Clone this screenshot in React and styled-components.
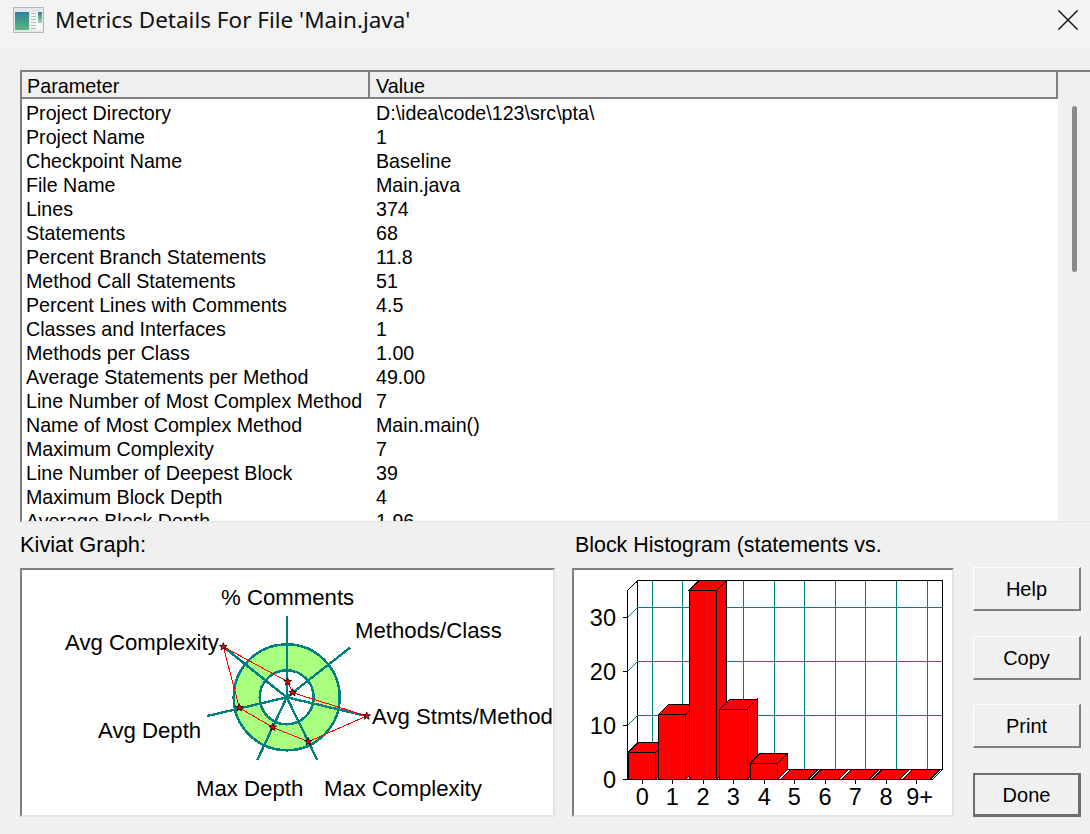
import React from 'react'
import styled, { createGlobalStyle } from 'styled-components'

const TEAL = '#008080'

const rows = [
  ['Project Directory', 'D:\\idea\\code\\123\\src\\pta\\'],
  ['Project Name', '1'],
  ['Checkpoint Name', 'Baseline'],
  ['File Name', 'Main.java'],
  ['Lines', '374'],
  ['Statements', '68'],
  ['Percent Branch Statements', '11.8'],
  ['Method Call Statements', '51'],
  ['Percent Lines with Comments', '4.5'],
  ['Classes and Interfaces', '1'],
  ['Methods per Class', '1.00'],
  ['Average Statements per Method', '49.00'],
  ['Line Number of Most Complex Method', '7'],
  ['Name of Most Complex Method', 'Main.main()'],
  ['Maximum Complexity', '7'],
  ['Line Number of Deepest Block', '39'],
  ['Maximum Block Depth', '4'],
  ['Average Block Depth', '1.96'],
]

const GlobalStyle = createGlobalStyle`
  html, body {
    margin: 0;
    padding: 0;
    background: #f0f0f0;
  }
  body {
    font-family: "Liberation Sans", Arial, sans-serif;
    color: #000;
  }
`

const Window = styled.div`
  width: 1090px;
  height: 834px;
  overflow: hidden;
  display: flex;
  flex-direction: column;
  background: #f0f0f0;
`

const TitleBar = styled.div`
  height: 48px;
  flex: none;
  display: flex;
  align-items: center;
  padding: 0 11px 8px 13px;
  box-sizing: border-box;
  background: #f3f3f3;
`

const Title = styled.div`
  flex: 1;
  margin: 0 0 2px 10px;
  font-family: "Noto Sans", sans-serif;
  font-size: 22.5px;
  color: #111;
`

const Grid = styled.div`
  margin: 22px 0 0 20px;
  height: 452px;
  flex: none;
  display: flex;
  border-top: 2px solid #808080;
  border-left: 2px solid #808080;
  border-bottom: 1px solid #e3e3e3;
  box-sizing: border-box;
`

const GridBody = styled.div`
  width: 1036px;
  flex: none;
  display: flex;
  flex-direction: column;
  background: #fff;
  overflow: hidden;
`

const HeaderRow = styled.div`
  height: 27px;
  flex: none;
  display: flex;
  background: #f0f0f0;
  border-bottom: 2px solid #808080;
  border-right: 2px solid #808080;
  box-sizing: border-box;
`

const HeaderCell = styled.div`
  width: ${p => p.$width}px;
  padding-left: ${p => p.$pad}px;
  font-size: 19.8px;
  line-height: 28px;
  box-sizing: border-box;
  border-right: ${p => (p.$divider ? '2px solid #808080' : 'none')};
`

const Rows = styled.div`
  padding-top: 2px;
`

const Row = styled.div`
  display: flex;
  height: 24px;
  font-size: 19.65px;
  line-height: 24px;
  white-space: nowrap;
`

const ParamCell = styled.div`
  width: 354px;
  padding-left: 4px;
  box-sizing: border-box;
  flex: none;
`

const ValueCell = styled.div`
  flex: 1;
`

const ScrollTrack = styled.div`
  flex: 1;
  padding: 34px 0 0 14px;
`

const ScrollThumb = styled.div`
  width: 5px;
  height: 166px;
  border-radius: 3px;
  background: #8a8a8a;
`

const Bottom = styled.div`
  flex: 1;
  display: flex;
  padding: 11px 9px 0 20px;
  min-height: 0;
`

const Section = styled.div`
  width: ${p => p.$width}px;
  margin-right: ${p => p.$gap}px;
  flex: none;
`

const SectionLabel = styled.div`
  height: 35px;
  font-size: ${p => p.$size}px;
  line-height: 24px;
  white-space: nowrap;
  margin-left: ${p => p.$indent || 0}px;
`

const ChartFrame = styled.div`
  height: 249px;
  box-sizing: border-box;
  background: #fff;
  border-top: 2px solid #808080;
  border-left: 2px solid #808080;
  border-right: 2px solid #e3e3e3;
  border-bottom: 2px solid #e3e3e3;
  overflow: hidden;

  svg {
    display: block;
  }
  text {
    font-family: "Liberation Sans", Arial, sans-serif;
    font-size: ${p => p.$fontSize}px;
    fill: #000;
  }
`

const Buttons = styled.div`
  width: 108px;
  flex: none;
  margin-top: 34px;
  display: flex;
  flex-direction: column;
  gap: 24.5px;
`

const Button = styled.button`
  height: 44px;
  padding: 2px 0 0;
  font-family: inherit;
  font-size: 20px;
  color: #000;
  background: #f0f0f0;
  box-sizing: border-box;
  border-style: solid;
  border-width: ${p => (p.$primary ? '2px 3px 3px 2px' : '1px 2px 2px 1px')};
  border-color: ${p => (p.$primary ? '#6e6e6e' : '#fff #808080 #808080 #fff')};
`

const AppIcon = () => (
  <svg width="32" height="26" viewBox="0 0 32 26">
    <defs>
      <linearGradient id="iconFill" x1="0" y1="0" x2="0" y2="1">
        <stop offset="0" stopColor="#2f7fa0" />
        <stop offset="1" stopColor="#5cb87a" />
      </linearGradient>
      <linearGradient id="iconStrip" x1="0" y1="0" x2="0" y2="1">
        <stop offset="0" stopColor="#2f7f90" />
        <stop offset="1" stopColor="#a5d8b8" />
      </linearGradient>
    </defs>
    <rect x="0.5" y="0.5" width="30" height="25" fill="#e4e7e9" stroke="#b4babe" />
    <rect x="2" y="5" width="14" height="18" fill="url(#iconFill)" />
    <rect x="17" y="5" width="12" height="18" fill="#f7f7f7" />
    <path d="M18 6.5h5M18 9.5h5M18 12.5h5M18 15.5h5M18 18.5h5M18 21.5h5" stroke="#b0b8bb" strokeWidth="1" />
    <rect x="25" y="5" width="4" height="11" fill="url(#iconStrip)" />
  </svg>
)

const CloseIcon = () => (
  <svg width="22" height="22" viewBox="0 0 22 22">
    <path d="M1.5 1.5l19 19M20.5 1.5l-19 19" stroke="#1a1a1a" strokeWidth="1.5" fill="none" />
  </svg>
)

// kiviat coordinates are local to the white frame (frame inner origin is 22,570 on the page)
const ox = 22
const oy = 570
const center = [286.7 - ox, 697.3 - oy]
const spokes = [
  [286.7, 616], [350, 647.7], [366.7, 716], [317.3, 760], [257.3, 760], [207.3, 716], [223.3, 646.7],
].map(([x, y]) => [x - ox, y - oy])
const trace = [
  [287.7, 681.7], [292.7, 692.7], [366.7, 716], [308.3, 741.7], [272.7, 727.3], [239.3, 707.7], [223.3, 646.7],
].map(([x, y]) => [x - ox, y - oy])
const kiviatLabels = [
  ['% Comments', 221, 605],
  ['Methods/Class', 355, 638],
  ['Avg Complexity', 65, 650],
  ['Avg Stmts/Method', 372, 724],
  ['Avg Depth', 98, 738],
  ['Max Depth', 196, 796],
  ['Max Complexity', 324, 796],
]

const starPoints = (x, y) => {
  const pts = []
  for (let i = 0; i < 10; i++) {
    const r = i % 2 ? 1.6 : 4
    const a = (Math.PI / 5) * i - Math.PI / 2
    pts.push(`${x + r * Math.cos(a)},${y + r * Math.sin(a)}`)
  }
  return pts.join(' ')
}

const KiviatGraph = () => (
  <svg width="533" height="245" viewBox="0 0 533 245">
    <g shapeRendering="crispEdges">
      <circle cx={center[0]} cy={center[1]} r="40" fill="none" stroke="#a8ff80" strokeWidth="26" />
      <circle cx={center[0]} cy={center[1]} r="53" fill="none" stroke={TEAL} strokeWidth="2.5" />
      <circle cx={center[0]} cy={center[1]} r="27" fill="none" stroke={TEAL} strokeWidth="2.5" />
      {spokes.map(([x, y], i) => (
        <line key={i} x1={center[0]} y1={center[1]} x2={x} y2={y} stroke={TEAL} strokeWidth="2.4" />
      ))}
      <polygon points={trace.map(p => p.join(',')).join(' ')} fill="none" stroke="#ff0000" strokeWidth="1" />
    </g>
    {trace.map(([x, y], i) => (
      <polygon key={i} points={starPoints(x, y)} fill="#ff0000" stroke="#000" strokeWidth="0.8" />
    ))}
    {kiviatLabels.map(([label, x, y]) => (
      <text key={label} x={x - ox} y={y - oy}>{label}</text>
    ))}
  </svg>
)

// histogram, page coordinates shifted into the frame (inner origin 574,570)
const hx = 574
const hy = 570
const DEPTH = 10
const BASE = 779.3
const TOP = 580.7
const PER_UNIT = 5.4
const bars = [
  [628.3, 5], [658.3, 12], [689.3, 35], [719.7, 13], [750.3, 3],
  [780.6, 0], [811.3, 0], [841.6, 0], [872.3, 0], [903, 0],
]
const BAR_W = 27.4
const vLines = [652.3, 682.3, 713, 743.3, 774.3, 804.3, 835.3, 865.7, 896.3, 927.3]
const ticks = [642.3, 672.3, 703, 733.3, 764.3, 794.3, 825, 855.3, 886, 916.7]
const xLabels = ['0', '1', '2', '3', '4', '5', '6', '7', '8', '9+']
const yLines = [[30, 607.3], [20, 661.3], [10, 715.3]]

const Bar = ({ x, value }) => {
  const l = x - hx
  const r = l + BAR_W
  const b = BASE - hy
  const t = b - value * PER_UNIT
  const topY = Math.max(t - DEPTH, TOP - hy)
  const shift = t - topY
  const props = { fill: '#ff0000', stroke: '#000', strokeWidth: 1 }
  return (
    <g>
      {value > 0 && <polygon {...props} points={`${r},${t} ${r + shift},${topY} ${r + shift},${b - DEPTH} ${r},${b}`} />}
      <polygon {...props} points={`${l},${t} ${l + shift},${topY} ${r + shift},${topY} ${r},${t}`} />
      {value > 0 && <rect {...props} x={l} y={t} width={BAR_W} height={b - t} />}
    </g>
  )
}

const Histogram = () => (
  <svg width="378" height="245" viewBox="0 0 378 245">
    <g shapeRendering="crispEdges">
      <rect x={637.7 - hx} y={TOP - hy} width={305} height={BASE - DEPTH - TOP} fill="#fff" stroke="#000" />
      {vLines.map(x => (
        <line key={x} x1={x - hx} y1={TOP - hy + 0.5} x2={x - hx} y2={BASE - DEPTH - hy} stroke={TEAL} />
      ))}
      {yLines.map(([v, y]) => (
        <g key={v}>
          <line x1={637.7 - hx} y1={y - hy} x2={942.7 - hx} y2={y - hy} stroke={TEAL} />
          <line x1={637.7 - hx} y1={y - hy} x2={627.7 - hx} y2={y + DEPTH - hy} stroke={TEAL} />
          <line x1={623.3 - hx} y1={y + DEPTH - hy} x2={627.7 - hx} y2={y + DEPTH - hy} stroke="#000" />
        </g>
      ))}
      <path
        d={`M${627.7 - hx} ${BASE - hy}V${590.3 - hy}L${637.7 - hx} ${TOP - hy}M${627.7 - hx} ${BASE - hy}L${637.7 - hx} ${BASE - DEPTH - hy}M${942.7 - hx} ${BASE - DEPTH - hy}L${932.7 - hx} ${BASE - hy}H${623.3 - hx}`}
        fill="none"
        stroke="#000"
      />
      {bars.map(([x, value]) => <Bar key={x} x={x} value={value} />)}
      {ticks.map(x => (
        <line key={x} x1={x - hx} y1={BASE - hy} x2={x - hx} y2={BASE + 5 - hy} stroke="#000" />
      ))}
    </g>
    {yLines.map(([v, y]) => (
      <text key={v} x={616 - hx} y={y + 18.5 - hy} textAnchor="end">{v}</text>
    ))}
    <text x={616 - hx} y={788 - hy} textAnchor="end">0</text>
    {ticks.map((x, i) => (
      <text key={x} x={x - hx + (i === 9 ? 3 : 0)} y={805 - hy} textAnchor="middle">{xLabels[i]}</text>
    ))}
  </svg>
)

const App = () => (
  <Window>
    <GlobalStyle />
    <TitleBar>
      <AppIcon />
      <Title>Metrics Details For File 'Main.java'</Title>
      <CloseIcon />
    </TitleBar>
    <Grid>
      <GridBody>
        <HeaderRow>
          <HeaderCell $width={348} $pad={5} $divider>Parameter</HeaderCell>
          <HeaderCell $width={600} $pad={6}>Value</HeaderCell>
        </HeaderRow>
        <Rows>
          {rows.map(([name, value]) => (
            <Row key={name}>
              <ParamCell>{name}</ParamCell>
              <ValueCell>{value}</ValueCell>
            </Row>
          ))}
        </Rows>
      </GridBody>
      <ScrollTrack>
        <ScrollThumb />
      </ScrollTrack>
    </Grid>
    <Bottom>
      <Section $width={535} $gap={17}>
        <SectionLabel $size={21.8}>Kiviat Graph:</SectionLabel>
        <ChartFrame $fontSize={22.2}><KiviatGraph /></ChartFrame>
      </Section>
      <Section $width={382} $gap={19}>
        <SectionLabel $size={21.4} $indent={3}>Block Histogram (statements vs.</SectionLabel>
        <ChartFrame $fontSize={23.5}><Histogram /></ChartFrame>
      </Section>
      <Buttons>
        <Button>Help</Button>
        <Button>Copy</Button>
        <Button>Print</Button>
        <Button $primary>Done</Button>
      </Buttons>
    </Bottom>
  </Window>
)

export default App
